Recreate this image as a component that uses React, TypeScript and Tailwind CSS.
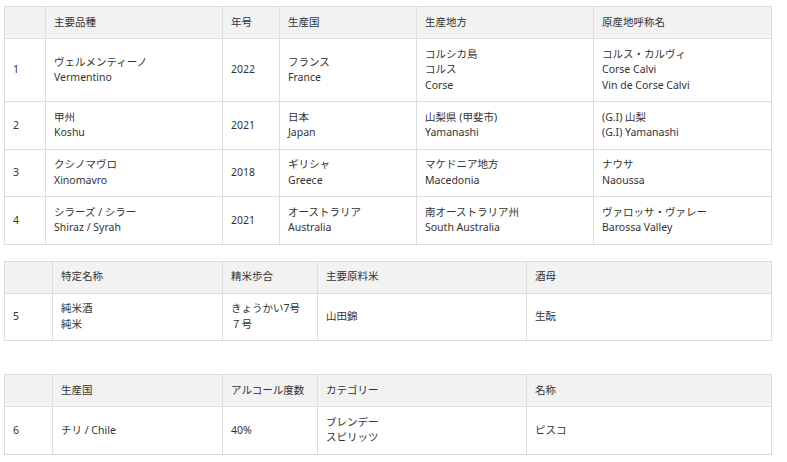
import React from 'react';

type Cell = string[];

const wineCols = [41, 177, 57, 137, 177, 178];
const wineHead = ['', '主要品種', '年号', '生産国', '生産地方', '原産地呼称名'];
const wineRows: Cell[][] = [
  [['1'], ['ヴェルメンティーノ', 'Vermentino'], ['2022'], ['フランス', 'France'], ['コルシカ島', 'コルス', 'Corse'], ['コルス・カルヴィ', 'Corse Calvi', 'Vin de Corse Calvi']],
  [['2'], ['甲州', 'Koshu'], ['2021'], ['日本', 'Japan'], ['山梨県 (甲斐市)', 'Yamanashi'], ['(G.I) 山梨', '(G.I) Yamanashi']],
  [['3'], ['クシノマヴロ', 'Xinomavro'], ['2018'], ['ギリシャ', 'Greece'], ['マケドニア地方', 'Macedonia'], ['ナウサ', 'Naoussa']],
  [['4'], ['シラーズ / シラー', 'Shiraz / Syrah'], ['2021'], ['オーストラリア', 'Australia'], ['南オーストラリア州', 'South Australia'], ['ヴァロッサ・ヴァレー', 'Barossa Valley']],
];

const otherCols = [48, 170, 95, 209, 245];
const sakeHead = ['', '特定名称', '精米歩合', '主要原料米', '酒母'];
const sakeRows: Cell[][] = [[['5'], ['純米酒', '純米'], ['きょうかい7号', '７号'], ['山田錦'], ['生酛']]];
const spiritHead = ['', '生産国', 'アルコール度数', 'カテゴリー', '名称'];
const spiritRows: Cell[][] = [[['6'], ['チリ / Chile'], ['40%'], ['ブレンデー', 'スピリッツ'], ['ピスコ']]];

function DataTable({ cols, head, rows }: { cols: number[]; head: string[]; rows: Cell[][] }) {
  return (
    <table className="table-fixed border-collapse w-[767px]">
      <colgroup>
        {cols.map((w, i) => (
          <col key={i} style={{ width: w }} />
        ))}
      </colgroup>
      <thead>
        <tr className="bg-[#f2f2f2]">
          {head.map((h, i) => (
            <th key={i} className="border border-[#dddddd] px-[8px] py-[7.75px] text-left font-normal align-middle">
              {h}
            </th>
          ))}
        </tr>
      </thead>
      <tbody>
        {rows.map((r, ri) => (
          <tr key={ri}>
            {r.map((c, ci) => (
              <td key={ci} className="border border-[#dddddd] px-[8px] py-[7.75px] align-middle">
                {c.map((line, li) => (
                  <div key={li}>{line}</div>
                ))}
              </td>
            ))}
          </tr>
        ))}
      </tbody>
    </table>
  );
}

export default function App() {
  return (
    <div
      className="bg-white w-[787px] h-[462px] pt-[6px] pl-[4px] text-[10.5px] leading-[15.5px] text-[#333333]"
      style={{ fontFamily: '"Noto Sans", "Noto Sans CJK JP", sans-serif' }}
    >
      <DataTable cols={wineCols} head={wineHead} rows={wineRows} />
      <div className="mt-[16px]">
        <DataTable cols={otherCols} head={sakeHead} rows={sakeRows} />
      </div>
      <div className="mt-[33px]">
        <DataTable cols={otherCols} head={spiritHead} rows={spiritRows} />
      </div>
    </div>
  );
}
